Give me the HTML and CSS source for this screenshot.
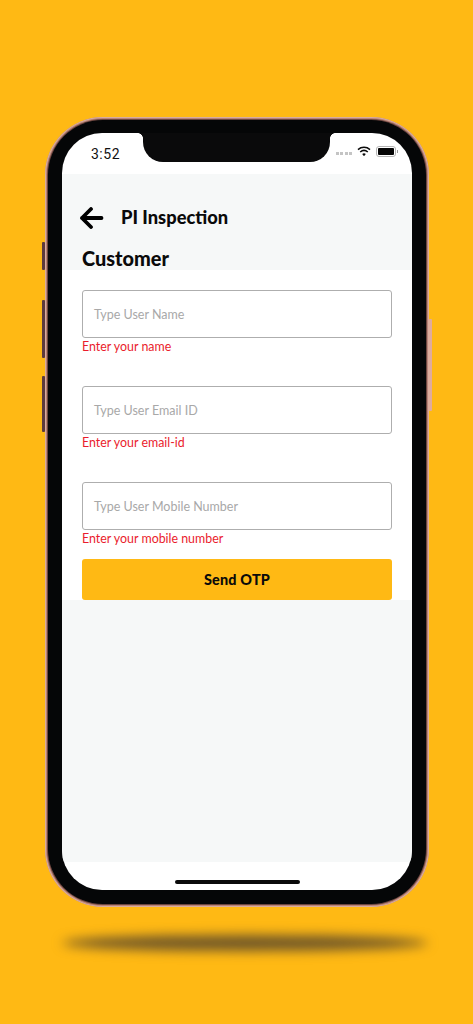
FILE: index.html
```html
<!DOCTYPE html>
<html lang="en">
<head>
<meta charset="utf-8">
<title>PI Inspection</title>
<link rel="stylesheet" href="styles.css">
</head>
<body>
<div class="stage">
  <div class="phone">
    <span class="side side-mute"></span>
    <span class="side side-up"></span>
    <span class="side side-down"></span>
    <span class="side side-power"></span>
    <div class="bezel">
      <div class="screen">
        <div class="notch"></div>
        <div class="status">
          <span class="time">3:52</span>
          <div class="status-icons">
            <span class="dots"><i></i><i></i><i></i><i></i></span>
            <svg class="wifi" width="14" height="11" viewBox="0 0 14 11"><path d="M1 3.6C4.4.6 9.600.6 13 3.600M3.200 6C5.400 4.100 8.600 4.100 10.800 6" fill="none" stroke="#0a0a0a" stroke-width="1.500"/><path d="M5.200 8a2.800 2.800 0 0 1 3.600 0L7 10.200z" fill="#0a0a0a"/></svg>
            <span class="battery"><span class="battery-fill"></span></span>
          </div>
        </div>
        <div class="app">
          <header class="appbar">
            <svg class="back" width="25" height="22" viewBox="0 0 25 22"><path d="M22.500 11H3M12 2l-9 9 9 9" fill="none" stroke="#000" stroke-width="3.800" stroke-linecap="round" stroke-linejoin="round"/></svg>
            <h1 class="title">PI Inspection</h1>
          </header>
          <h2 class="section">Customer</h2>
          <form class="form">
            <div class="field">
              <div class="input">Type User Name</div>
              <p class="error">Enter your name</p>
            </div>
            <div class="field">
              <div class="input">Type User Email ID</div>
              <p class="error">Enter your email-id</p>
            </div>
            <div class="field">
              <div class="input">Type User Mobile Number</div>
              <p class="error">Enter your mobile number</p>
            </div>
            <div class="submit">Send OTP</div>
          </form>
        </div>
        <div class="home"><span class="home-bar"></span></div>
      </div>
    </div>
  </div>
  <div class="shadow"></div>
</div>
</body>
</html>
```
FILE: styles.css
```css
* { box-sizing: border-box; }
html, body { margin: 0; height: 100%; }
body { background: #ffb914; font-family: "Lato", "Liberation Sans", sans-serif; overflow: hidden; }
.stage { width: 473px; height: 1024px; padding: 117px 0 0 45px; }
.phone {
  position: relative;
  width: 384px;
  height: 790px;
  border-radius: 58px;
  padding: 3px;
  background: #b98377;
  box-shadow: inset 0 0 0 1px #d9ad9e;
}
.side { position: absolute; width: 3px; background: #5d3a3e; border-radius: 1px; }
.side-mute { left: -3px; top: 125px; height: 28px; }
.side-up { left: -3px; top: 183px; height: 58px; }
.side-down { left: -3px; top: 259px; height: 56px; }
.side-power { right: -3px; top: 202px; height: 92px; width: 3px; background: #e0ab9c; }
.bezel {
  height: 100%;
  border-radius: 55px;
  background: #050607;
  padding: 13px 14px 14px;
  box-shadow: 0 0 0 1px #6d463f;
}
.screen {
  position: relative;
  height: 757px;
  border-radius: 40px;
  background: #fff;
  overflow: hidden;
  display: flex;
  flex-direction: column;
}
.notch {
  position: absolute;
  left: 81px;
  top: 0;
  width: 187px;
  height: 29px;
  background: #0a0a0b;
  border-radius: 0 0 20px 20px;
}
.notch::before, .notch::after {
  content: "";
  position: absolute;
  top: 0;
  width: 5px;
  height: 5px;
}
.notch::before { left: -5px; background: radial-gradient(circle at 0 100%, transparent 4.500px, #0a0a0b 5px); }
.notch::after { right: -5px; background: radial-gradient(circle at 100% 100%, transparent 4.500px, #0a0a0b 5px); }
.status {
  height: 41px;
  flex: none;
  display: flex;
  justify-content: space-between;
  align-items: flex-start;
  padding: 13px 16px 0 29px;
}
.time { font: 400 14px/16px "Roboto", sans-serif; letter-spacing: .5px; color: #111; }
.status-icons { display: flex; align-items: center; gap: 5px; padding-top: 0; }
.dots { display: flex; gap: 1.500px; margin-top: 4px; }
.dots i { width: 3px; height: 3px; background: #c4c4c4; }
.battery { position: relative; display: block; width: 20px; height: 11px; padding: 1px; border: 1px solid #b5b5b5; border-radius: 3px; }
.battery::after { content: ""; position: absolute; right: -3px; top: 3px; width: 1.500px; height: 3px; background: #999; }
.battery-fill { display: block; height: 100%; background: #050505; border-radius: 1px; }
.app { flex: 1; background: #f6f8f8; display: flex; flex-direction: column; }
.appbar { display: flex; align-items: center; height: 34px; margin-top: 27px; padding-left: 17px; gap: 17px; }
.back { flex: none; }
.title { margin: 0 0 2px; font-size: 18.300px; font-weight: 900; color: #0a0a0a; line-height: 32px; }
.section { margin: 10px 0 0; padding-left: 20px; font-size: 19.900px; font-weight: 900; color: #0a0a0a; line-height: 26px; height: 25px; }
.form { background: #fff; height: 330px; padding: 20px 20px 0; display: flex; flex-direction: column; }
.field { height: 96.500px; }
.input {
  height: 48px;
  border: 1px solid #aeaeae;
  border-radius: 3px;
  background: #fff;
  padding: 1px 0 0 11px;
  display: flex;
  align-items: center;
  font-size: 12.500px;
  color: #a8a8a8;
}
.error { margin: 1px 0 0; font-size: 12.400px; line-height: 16px; color: #ea1c2c; }
.submit {
  margin-top: -19.500px;
  height: 41px;
  border-radius: 3px;
  background: #ffb914;
  display: flex;
  align-items: center;
  justify-content: center;
  font-size: 14.400px;
  font-weight: 900;
  color: #0a0a0a;
  letter-spacing: .2px;
}
.home { flex: none; height: 28px; display: flex; justify-content: center; align-items: flex-start; padding-top: 18px; }
.home-bar { width: 125px; height: 4px; border-radius: 2px; background: #0a0a0a; }
.shadow {
  width: 366px;
  height: 16px;
  margin: 28px 0 0 17px;
  border-radius: 50%;
  background: #6f5628;
  filter: blur(6px);
}
```
